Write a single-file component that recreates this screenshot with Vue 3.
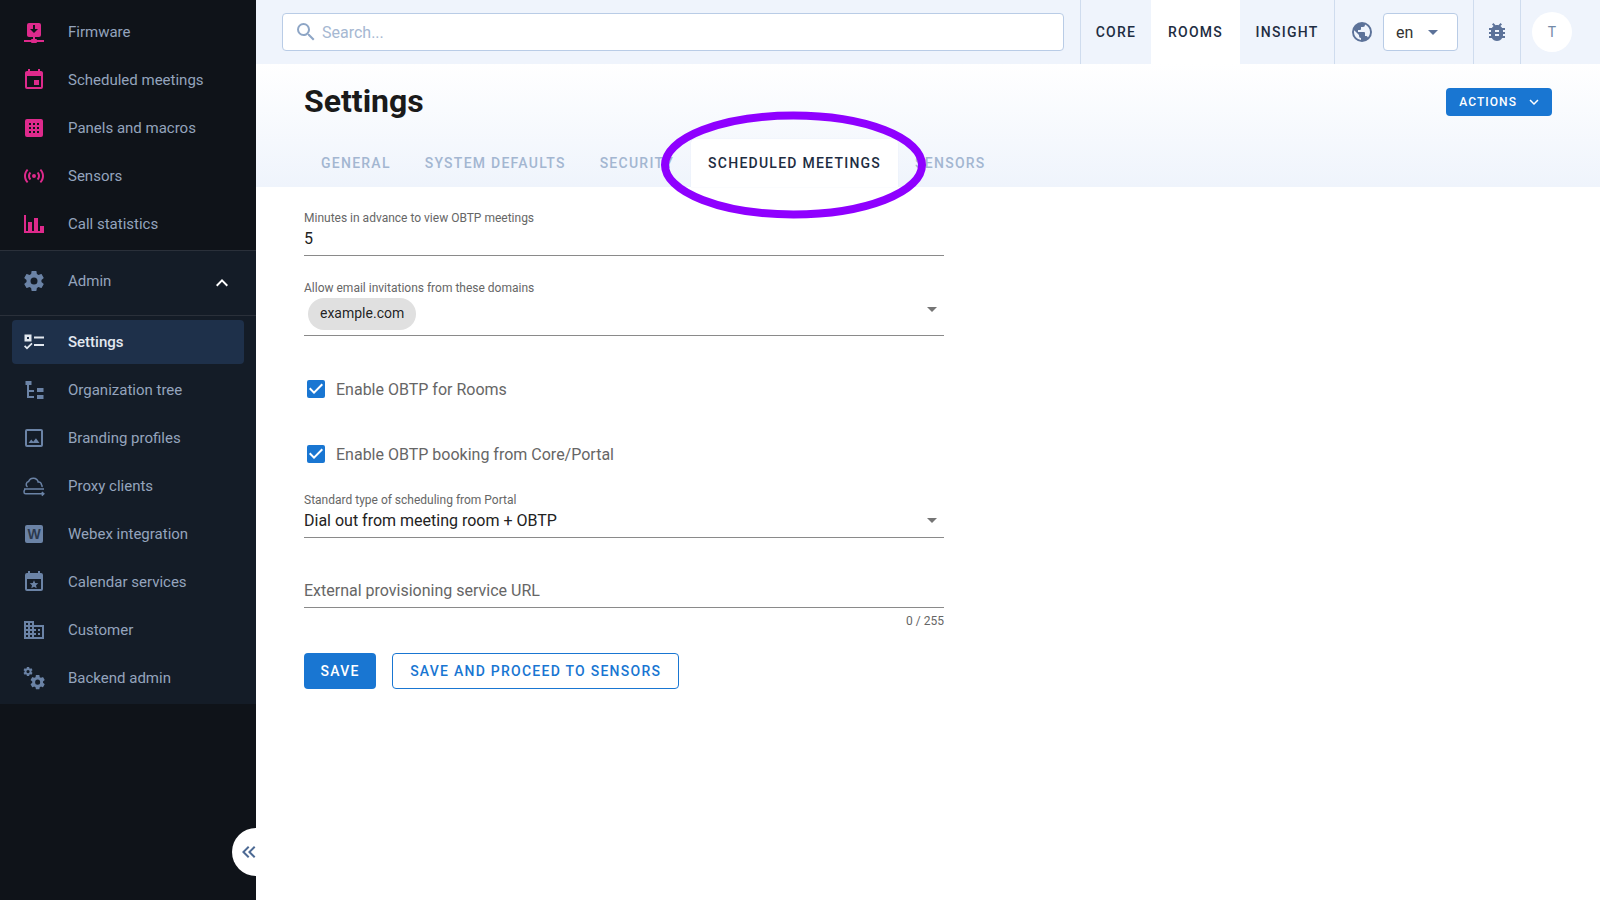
<script setup>
import { ref } from "vue";

const cog =
  "M12,15.5A3.5,3.5 0 0,1 8.5,12A3.5,3.5 0 0,1 12,8.5A3.5,3.5 0 0,1 15.5,12A3.5,3.5 0 0,1 12,15.5M19.43,12.97C19.47,12.65 19.5,12.33 19.5,12C19.5,11.67 19.47,11.34 19.43,11L21.54,9.37C21.73,9.22 21.78,8.95 21.66,8.73L19.66,5.27C19.54,5.05 19.27,4.96 19.05,5.05L16.56,6.05C16.04,5.66 15.5,5.32 14.87,5.07L14.5,2.42C14.46,2.18 14.25,2 14,2H10C9.75,2 9.54,2.18 9.5,2.42L9.13,5.07C8.5,5.32 7.96,5.66 7.44,6.05L4.95,5.05C4.73,4.96 4.46,5.05 4.34,5.27L2.34,8.73C2.21,8.95 2.27,9.22 2.46,9.37L4.57,11C4.53,11.34 4.5,11.67 4.5,12C4.5,12.33 4.53,12.65 4.57,12.97L2.46,14.63C2.27,14.78 2.21,15.05 2.34,15.27L4.34,18.73C4.46,18.95 4.73,19.03 4.95,18.95L7.44,17.94C7.96,18.34 8.5,18.68 9.13,18.93L9.5,21.58C9.54,21.82 9.75,22 10,22H14C14.25,22 14.46,21.82 14.5,21.58L14.87,18.93C15.5,18.67 16.04,18.34 16.56,17.94L19.05,18.95C19.27,19.03 19.54,18.95 19.66,18.73L21.66,15.27C21.78,15.05 21.73,14.78 21.54,14.63L19.43,12.97Z";

const topItems = [
  {
    name: "Firmware",
    d: "M17,3A2,2 0 0,1 19,5V15A2,2 0 0,1 17,17H13V19H14A1,1 0 0,1 15,20H22V22H15A1,1 0 0,1 14,23H10A1,1 0 0,1 9,22H2V20H9A1,1 0 0,1 10,19H11V17H7C5.89,17 5,16.1 5,15V5A2,2 0 0,1 7,3H17M11,5V9H8L12,13L16,9H13V5H11Z",
  },
  {
    name: "Scheduled meetings",
    d: "M19,19H5V8H19M16,1V3H8V1H6V3H5C3.89,3 3,3.89 3,5V19A2,2 0 0,0 5,21H19A2,2 0 0,0 21,19V5C21,3.89 20.1,3 19,3H18V1M17,12H12V17H17V12Z",
  },
  {
    name: "Panels and macros",
    d: "M5 3H19A2 2 0 0 1 21 5V19A2 2 0 0 1 19 21H5A2 2 0 0 1 3 19V5A2 2 0 0 1 5 3ZM7 7V9H9V7ZM11 7V9H13V7ZM15 7V9H17V7ZM7 11V13H9V11ZM11 11V13H13V11ZM15 11V13H17V11ZM7 15V17H9V15ZM11 15V17H13V15ZM15 15V17H17V15Z",
  },
  {
    name: "Sensors",
    d: "M4.93,4.93C3.12,6.74 2,9.24 2,12C2,14.76 3.12,17.26 4.93,19.07L6.34,17.66C4.89,16.22 4,14.22 4,12C4,9.79 4.89,7.78 6.34,6.34L4.93,4.93M19.07,4.93L17.66,6.34C19.11,7.78 20,9.79 20,12C20,14.22 19.11,16.22 17.66,17.66L19.07,19.07C20.88,17.26 22,14.76 22,12C22,9.24 20.88,6.74 19.07,4.93M7.76,7.76C6.67,8.85 6,10.35 6,12C6,13.65 6.67,15.15 7.76,16.24L9.17,14.83C8.45,14.11 8,13.11 8,12C8,10.89 8.45,9.89 9.17,9.17L7.76,7.76M16.24,7.76L14.83,9.17C15.55,9.89 16,10.89 16,12C16,13.11 15.55,14.11 14.83,14.83L16.24,16.24C17.33,15.15 18,13.65 18,12C18,10.35 17.33,8.85 16.24,7.76M12,10A2,2 0 0,0 10,12A2,2 0 0,0 12,14A2,2 0 0,0 14,12A2,2 0 0,0 12,10Z",
  },
  { name: "Call statistics", d: "M22,21H2V3H4V19H6V10H10V19H12V6H16V19H18V14H22V21Z" },
];

const adminItems = [
  {
    name: "Settings",
    active: true,
    d: "M2.5 4.5H9.5V11.5H2.5ZM5 7V9H7V7ZM12 6.5H22V8.5H12ZM12 14H22V16H12ZM2 16.5L3.2 15.3 5 17.1 9.4 12.7 10.6 13.9 5 19.5Z",
  },
  {
    name: "Organization tree",
    d: "M3.5 3H9.5V7H7V12H12V14H7V18H12V20H5V7H3.5ZM15 10H21.5V14H15ZM15 17H21.5V21H15Z",
  },
  {
    name: "Branding profiles",
    d: "M19,19H5V5H19M19,3H5A2,2 0 0,0 3,5V19A2,2 0 0,0 5,21H19A2,2 0 0,0 21,19V5A2,2 0 0,0 19,3M13.96,12.29L11.21,15.83L9.25,13.47L6.5,17H17.5L13.96,12.29Z",
  },
  {
    name: "Proxy clients",
    d: "",
    stroke: "M5.5 13A3 3 0 0 1 6.6 7.6 5 5 0 0 1 16.2 8 2.6 2.6 0 0 1 19.4 10.6 2.6 2.6 0 0 1 20 13M2 15H22M2.8 15.4Q2 17 2 18 2 19.8 3.6 19.8H21.5M19.8 18L21.8 19.8 19.8 21.6",
  },
  {
    name: "Webex integration",
    d: "M5 3H19A2 2 0 0 1 21 5V19A2 2 0 0 1 19 21H5A2 2 0 0 1 3 19V5A2 2 0 0 1 5 3Z",
    letter: "W",
  },
  {
    name: "Calendar services",
    d: "M19 3H18V1H16V3H8V1H6V3H5A2 2 0 0 0 3 5V19A2 2 0 0 0 5 21H19A2 2 0 0 0 21 19V5A2 2 0 0 0 19 3ZM19 19H5V9H19ZM12 10.2L13.2 13 16.3 13.3 14 15.3 14.7 18.3 12 16.7 9.3 18.3 10 15.3 7.7 13.3 10.8 13Z",
  },
  {
    name: "Customer",
    d: "M18,15H16V17H18M18,11H16V13H18M20,19H12V17H14V15H12V13H14V11H12V9H20M10,7H8V5H10M10,11H8V9H10M10,15H8V13H10M10,19H8V17H10M6,7H4V5H6M6,11H4V9H6M6,15H4V13H6M6,19H4V17H6M12,7V3H2V21H22V7H12Z",
  },
  { name: "Backend admin", d: "", cogs: true },
];

const tabs = ["General", "System defaults", "Security", "Scheduled meetings", "Sensors"];
const products = ["Core", "Rooms", "Insight"];

const search = ref("");
const minutes = ref("5");
const provisioningUrl = ref("");
const obtpRooms = ref(true);
const obtpPortal = ref(true);
</script>

<template>
  <div class="app">
    <aside class="sidebar">
      <nav class="nav-top">
        <a v-for="item in topItems" :key="item.name" class="nav-item pink">
          <svg class="nav-icon" viewBox="0 0 24 24"><path :d="item.d" fill-rule="evenodd" /></svg>
          <span>{{ item.name }}</span>
        </a>
      </nav>
      <div class="admin">
        <div class="admin-head">
          <svg class="nav-icon" viewBox="0 0 24 24"><path :d="cog" /></svg>
          <span>Admin</span>
          <svg class="chevron" viewBox="0 0 24 24"><path d="M7.41,15.41L12,10.83L16.59,15.41L18,14L12,8L6,14L7.41,15.41Z" /></svg>
        </div>
        <a v-for="item in adminItems" :key="item.name" class="nav-item" :class="{ active: item.active }">
          <svg class="nav-icon" viewBox="0 0 24 24">
            <path v-if="item.d" :d="item.d" fill-rule="evenodd" />
            <path v-if="item.stroke" :d="item.stroke" fill="none" stroke="currentColor" stroke-width="1.5" />
            <text v-if="item.letter" x="12" y="17.2" text-anchor="middle" class="letter">{{ item.letter }}</text>
            <g v-if="item.cogs">
              <path :d="cog" transform="translate(0.5 0) scale(0.46)" />
              <path :d="cog" transform="translate(7 7.5) scale(0.72)" />
            </g>
          </svg>
          <span>{{ item.name }}</span>
        </a>
      </div>
    </aside>

    <button class="collapse">
      <svg viewBox="0 0 24 24"><path d="M18.41,7.41L17,6L11,12L17,18L18.41,16.59L13.83,12L18.41,7.41M12.41,7.41L11,6L5,12L11,18L12.41,16.59L7.83,12L12.41,7.41Z" /></svg>
    </button>

    <main class="main">
      <header class="topbar">
        <div class="search-wrap">
          <label class="search">
            <svg viewBox="0 0 24 24"><path d="M9.5,3A6.5,6.5 0 0,1 16,9.5C16,11.11 15.41,12.59 14.44,13.73L14.71,14H15.5L20.5,19L19,20.5L14,15.5V14.71L13.73,14.44C12.59,15.41 11.11,16 9.5,16A6.5,6.5 0 0,1 3,9.5A6.5,6.5 0 0,1 9.5,3M9.5,5C7,5 5,7 5,9.5C5,12 7,14 9.5,14C12,14 14,12 14,9.5C14,7 12,5 9.5,5Z" /></svg>
            <input v-model="search" type="text" placeholder="Search..." />
          </label>
        </div>
        <div class="products">
          <a v-for="p in products" :key="p" class="product" :class="{ current: p === 'Rooms' }">{{ p }}</a>
        </div>
        <div class="lang">
          <svg class="globe" viewBox="0 0 24 24"><path d="M17.9,17.39C17.64,16.59 16.89,16 16,16H15V13A1,1 0 0,0 14,12H8V10H10A1,1 0 0,0 11,9V7H13A2,2 0 0,0 15,5V4.59C17.93,5.77 20,8.64 20,12C20,14.08 19.2,15.97 17.9,17.39M11,19.93C7.05,19.44 4,16.08 4,12C4,11.38 4.08,10.78 4.21,10.21L9,15V16A2,2 0 0,0 11,18M12,2A10,10 0 0,0 2,12A10,10 0 0,0 12,22A10,10 0 0,0 22,12A10,10 0 0,0 12,2Z" /></svg>
          <div class="lang-select">
            <span>en</span>
            <i class="caret slate"></i>
          </div>
        </div>
        <div class="bug">
          <svg viewBox="0 0 24 24"><path d="M14,12H10V10H14M14,16H10V14H14M20,8H17.19C16.74,7.22 16.12,6.55 15.37,6.04L17,4.41L15.59,3L13.42,5.17C12.96,5.06 12.5,5 12,5C11.5,5 11.04,5.06 10.59,5.17L8.41,3L7,4.41L8.62,6.04C7.88,6.55 7.26,7.22 6.81,8H4V10H6.09C6.04,10.33 6,10.66 6,11V12H4V14H6V15C6,15.34 6.04,15.67 6.09,16H4V18H6.81C7.85,19.79 9.78,21 12,21C14.22,21 16.15,19.79 17.19,18H20V16H17.91C17.96,15.67 18,15.34 18,15V14H20V12H18V11C18,10.66 17.96,10.33 17.91,10H20V8Z" /></svg>
        </div>
        <div class="user">
          <div class="avatar">T</div>
        </div>
      </header>

      <section class="page-head">
        <div class="title-row">
          <h1>Settings</h1>
          <button class="actions">
            Actions
            <svg viewBox="0 0 24 24"><path d="M7.41,8.58L12,13.17L16.59,8.58L18,10L12,16L6,10L7.41,8.58Z" /></svg>
          </button>
        </div>
        <div class="tabs">
          <a v-for="t in tabs" :key="t" class="tab" :class="{ selected: t === 'Scheduled meetings' }">{{ t }}</a>
        </div>
      </section>

      <form class="form" @submit.prevent>
        <div class="field first">
          <label>Minutes in advance to view OBTP meetings</label>
          <input v-model="minutes" class="line-input" type="text" />
        </div>

        <div class="field domains">
          <label>Allow email invitations from these domains</label>
          <div class="chip-row">
            <span class="chip">example.com</span>
            <i class="caret grey up"></i>
          </div>
        </div>

        <label class="check first-check">
          <input v-model="obtpRooms" type="checkbox" />
          <span class="box"><svg viewBox="3 3 18 18"><path d="M10,17L5,12L6.41,10.58L10,14.17L17.59,6.58L19,8L10,17Z" /></svg></span>
          Enable OBTP for Rooms
        </label>
        <label class="check">
          <input v-model="obtpPortal" type="checkbox" />
          <span class="box"><svg viewBox="3 3 18 18"><path d="M10,17L5,12L6.41,10.58L10,14.17L17.59,6.58L19,8L10,17Z" /></svg></span>
          Enable OBTP booking from Core/Portal
        </label>

        <div class="field standard">
          <label>Standard type of scheduling from Portal</label>
          <div class="select-row">
            <span>Dial out from meeting room + OBTP</span>
            <i class="caret grey"></i>
          </div>
        </div>

        <div class="field external">
          <input v-model="provisioningUrl" class="line-input tall" type="text" placeholder="External provisioning service URL" />
          <div class="counter">{{ provisioningUrl.length }} / 255</div>
        </div>

        <div class="buttons">
          <button class="btn primary">Save</button>
          <button class="btn outline">Save and proceed to Sensors</button>
        </div>
      </form>

      <svg class="highlight" viewBox="0 0 280 120">
        <ellipse cx="137.5" cy="60" rx="128.5" ry="49.5" fill="none" stroke="#8f00ff" stroke-width="8" />
      </svg>
    </main>
  </div>
</template>

<style scoped>
.app {
  position: relative;
  display: flex;
  height: 900px;
  overflow: hidden;
  font-family: Roboto, "Liberation Sans", sans-serif;
}
.sidebar {
  width: 256px;
  flex: none;
  background: #0f1319;
  padding-top: 8px;
  box-sizing: border-box;
}
.nav-top {
  padding-bottom: 2px;
}
.nav-item {
  display: flex;
  align-items: center;
  height: 48px;
  padding-left: 22px;
  color: #94a4bd;
  font-size: 15px;
}
.nav-icon {
  width: 24px;
  height: 24px;
  flex: none;
  margin-right: 22px;
  fill: currentColor;
  color: #6b83a6;
}
.nav-item.pink .nav-icon {
  color: #de2a8c;
}
.admin {
  background: #141c27;
  padding-bottom: 2px;
  border-top: 1px solid #2a303a;
}
.admin-head {
  display: flex;
  align-items: center;
  height: 65px;
  padding: 0 22px 4px;
  color: #94a4bd;
  font-size: 15px;
  border-bottom: 1px solid #2a303a;
  box-sizing: border-box;
}
.admin-head span {
  flex: 1;
}
.chevron {
  width: 24px;
  height: 24px;
  margin-top: 4px;
  fill: #fff;
}
.nav-item.active {
  height: 44px;
  margin: 4px 12px 0;
  padding-left: 10px;
  border-radius: 4px;
  background: #1e304a;
  color: #e2e8f0;
  font-weight: 500;
}
.nav-item.active + .nav-item {
  margin-top: 2px;
}
.nav-item.active .nav-icon {
  color: #e2e8f0;
}
.letter {
  font-family: "Liberation Sans", sans-serif;
  font-size: 14px;
  font-weight: 700;
  fill: #2c3a4e;
}
.collapse {
  position: absolute;
  left: 232px;
  top: 828px;
  width: 48px;
  height: 48px;
  padding: 0 0 0 5px;
  border: none;
  border-radius: 50%;
  background: #fff;
  display: flex;
  align-items: center;
  z-index: 2;
}
.collapse svg {
  width: 24px;
  height: 24px;
  fill: #4d6a94;
}
.main {
  position: relative;
  flex: 1;
  min-width: 0;
  background: #fff;
}
.topbar {
  display: flex;
  height: 64px;
  background: #eff4fc;
}
.search-wrap {
  flex: 1;
  display: flex;
  align-items: center;
  padding: 0 16px 0 26px;
}
.search {
  flex: 1;
  display: flex;
  align-items: center;
  height: 38px;
  padding: 0 11px;
  box-sizing: border-box;
  background: #fff;
  border: 1px solid #b9cce6;
  border-radius: 4px;
}
.search svg {
  width: 24px;
  height: 24px;
  flex: none;
  margin-right: 4px;
  fill: #8ea6c6;
}
.search input {
  flex: 1;
  padding: 0;
  border: none;
  outline: none;
  font: 16px Roboto, sans-serif;
}
.search input::placeholder {
  color: #a6b8d2;
  opacity: 1;
}
.products {
  display: flex;
  width: 255px;
  box-sizing: border-box;
  border-left: 1px solid #cfdcee;
  border-right: 1px solid #cfdcee;
}
.product {
  display: flex;
  align-items: center;
  justify-content: center;
  font-size: 14px;
  font-weight: 500;
  letter-spacing: 1.25px;
  text-transform: uppercase;
  color: #1e2d42;
}
.product:nth-child(1) {
  width: 70px;
}
.product:nth-child(2) {
  width: 89px;
}
.product:nth-child(3) {
  width: 94px;
}
.product.current {
  background: #fff;
}
.lang {
  display: flex;
  align-items: center;
  padding: 0 15px;
  border-right: 1px solid #cfdcee;
}
.globe {
  width: 24px;
  height: 24px;
  margin-right: 9px;
  fill: #5c7299;
}
.lang-select {
  display: flex;
  align-items: center;
  justify-content: space-between;
  width: 75px;
  height: 38px;
  padding: 0 19px 0 12px;
  box-sizing: border-box;
  background: #fff;
  border: 1px solid #b9cce6;
  border-radius: 4px;
  font-size: 16px;
  color: #333;
}
.caret {
  display: block;
  width: 0;
  height: 0;
  border-left: 5px solid transparent;
  border-right: 5px solid transparent;
  border-top: 5px solid #757575;
}
.caret.slate {
  border-top-color: #5c7299;
}
.bug {
  display: flex;
  align-items: center;
  justify-content: center;
  width: 47px;
  box-sizing: border-box;
  border-right: 1px solid #cfdcee;
}
.bug svg {
  width: 24px;
  height: 24px;
  fill: #5c7299;
}
.user {
  display: flex;
  align-items: center;
  padding: 0 28px 0 11px;
}
.avatar {
  display: flex;
  align-items: center;
  justify-content: center;
  width: 40px;
  height: 40px;
  border-radius: 50%;
  background: #fff;
  color: #7389a8;
  font-size: 14px;
}
.page-head {
  height: 123px;
  padding: 0 48px;
  background: linear-gradient(#fff, #eff4fc);
}
.title-row {
  display: flex;
  align-items: center;
  justify-content: space-between;
  height: 75px;
}
h1 {
  margin: 0 0 2px;
  font-size: 32px;
  font-weight: 700;
  color: #1a1a1a;
}
.actions {
  display: flex;
  align-items: center;
  height: 28px;
  padding: 0 9px 0 13px;
  border: none;
  border-radius: 4px;
  background: #1976d2;
  color: #fff;
  font: 500 12px Roboto, sans-serif;
  letter-spacing: 1.07px;
  text-transform: uppercase;
}
.actions svg {
  width: 18px;
  height: 18px;
  margin-left: 8px;
  fill: #fff;
}
.tabs {
  display: flex;
  height: 48px;
}
.tab {
  display: flex;
  align-items: center;
  padding: 0 17px;
  font-size: 14px;
  font-weight: 500;
  letter-spacing: 1.25px;
  text-transform: uppercase;
  color: #a3b6d1;
}
.tab.selected {
  background: #fff;
  color: #1e2d42;
  border-radius: 4px 4px 0 0;
  box-shadow: 0 0 1px #cfdcee;
}
.form {
  width: 640px;
  margin-left: 48px;
  color: rgba(0, 0, 0, 0.87);
}
.field label {
  display: block;
  height: 16px;
  line-height: 16px;
  font-size: 12px;
  color: #666;
}
.field.first {
  padding-top: 23px;
}
.domains {
  margin-top: 24px;
}
.line-input {
  display: block;
  width: 100%;
  height: 30px;
  padding: 0 0 5px;
  box-sizing: border-box;
  border: none;
  border-bottom: 1px solid #8a8a8a;
  outline: none;
  font: 16px Roboto, sans-serif;
  color: #222;
}
.line-input::placeholder {
  color: #666;
  opacity: 1;
}
.chip-row {
  display: flex;
  align-items: flex-start;
  justify-content: space-between;
  height: 40px;
  padding: 2px 7px 0 4px;
  box-sizing: border-box;
  border-bottom: 1px solid #8a8a8a;
}
.chip {
  display: flex;
  align-items: center;
  height: 32px;
  padding: 0 12px 2px;
  box-sizing: border-box;
  border-radius: 16px;
  background: #e0e0e0;
  font-size: 14px;
}
.caret.up {
  margin-top: 9px;
}
.select-row {
  display: flex;
  align-items: center;
  justify-content: space-between;
  height: 30px;
  padding: 0 7px 5px 0;
  box-sizing: border-box;
  border-bottom: 1px solid #8a8a8a;
  font-size: 16px;
  color: #222;
}
.check {
  display: flex;
  align-items: center;
  height: 24px;
  margin-top: 41px;
  padding-left: 3px;
  font-size: 16px;
  color: #666;
}
.check input {
  position: absolute;
  opacity: 0;
}
.box {
  display: flex;
  width: 18px;
  height: 18px;
  margin-right: 11px;
  border-radius: 2px;
  background: #1976d2;
}
.box svg {
  width: 18px;
  height: 18px;
  fill: #fff;
}
.standard {
  margin-top: 26px;
}
.external {
  margin-top: 40px;
}
.counter {
  margin-top: 5px;
  height: 16px;
  line-height: 16px;
  text-align: right;
  font-size: 12px;
  color: #666;
}
.buttons {
  display: flex;
  gap: 16px;
  margin-top: 24px;
}
.btn {
  height: 36px;
  padding: 0 16.5px;
  box-sizing: border-box;
  border-radius: 4px;
  font: 500 14px Roboto, sans-serif;
  letter-spacing: 1.25px;
  text-transform: uppercase;
}
.primary {
  border: none;
  background: #1976d2;
  color: #fff;
}
.outline {
  padding: 0 17px;
  border: 1px solid #1976d2;
  background: #fff;
  color: #1976d2;
}
.highlight {
  position: absolute;
  left: 400px;
  top: 105px;
  width: 280px;
  height: 120px;
  pointer-events: none;
}
</style>
